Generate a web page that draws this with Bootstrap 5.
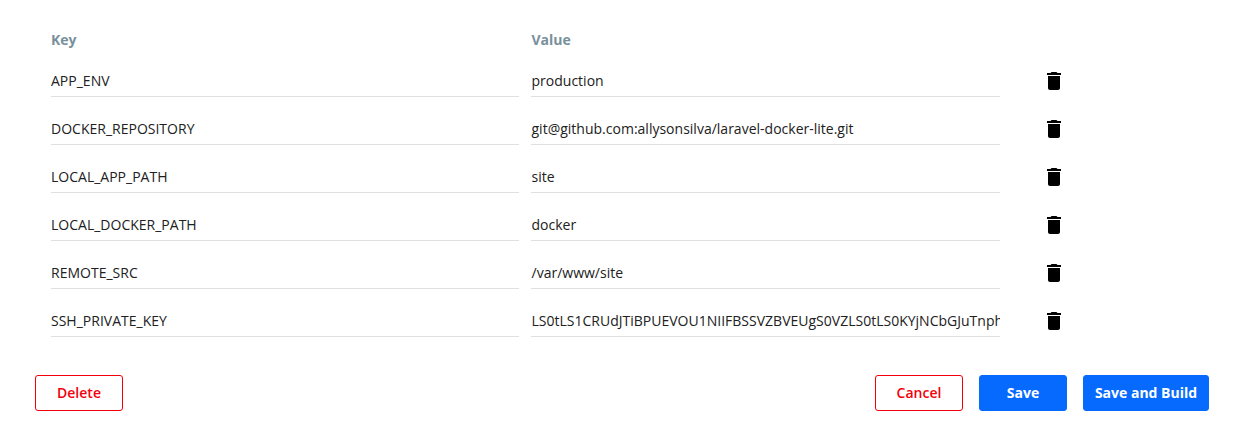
<!DOCTYPE html>
<html lang="en">
<head>
<meta charset="utf-8">
<meta name="viewport" content="width=device-width, initial-scale=1">
<title>Environment variables</title>
<link href="https://cdn.jsdelivr.net/npm/bootstrap@5.3.0/dist/css/bootstrap.min.css" rel="stylesheet">
<style>
body{font-family:"Open Sans",sans-serif;font-size:14px;line-height:20px;color:#212121;background:#fff}
.env-form{padding:30px 33px 28px 35px}
.env-grid{margin-left:16px}
.env-head{height:27px;color:#78909c;font-weight:700}
.env-key,.env-value{width:468px;margin-right:12px;flex:none}
.env-value{width:469px;margin-right:42px}
.env-head .env-value,.env-value .env-field{padding-left:.5px}
.env-row{height:48px}
.env-field{height:40px;line-height:48px;border-bottom:1px solid #e0e0e0;white-space:nowrap;overflow:hidden;letter-spacing:.005px}
.trash{width:24px;height:24px;margin-top:12px;color:#000}
.env-actions{margin-top:30px;gap:16px}
.env-btn{width:88px;height:36px;padding:0;border-radius:3px;font-size:14px;font-weight:700;line-height:34px;border:1px solid}
.env-btn.outline{color:#f3000b;border-color:#f3000b;background:#fff;font-weight:600}
.env-btn.solid{color:#fff;border-color:#066aff;background:#066aff}
.env-btn.wide{width:126px}
</style>
</head>
<body>
<svg class="d-none" xmlns="http://www.w3.org/2000/svg"><symbol id="trash" viewBox="0 0 24 24"><path fill="currentColor" d="M6 19c0 1.1.9 2 2 2h8c1.1 0 2-.9 2-2V7H6v12zM19 4h-3.5l-1-1h-5l-1 1H5v2h14V4z"/></symbol></svg>
<main class="env-form">
  <div class="env-grid">
    <div class="env-head d-flex"><div class="env-key">Key</div><div class="env-value">Value</div></div>
    <div class="env-row d-flex"><div class="env-key"><div class="env-field">APP_ENV</div></div><div class="env-value"><div class="env-field">production</div></div><svg class="trash"><use href="#trash"/></svg></div>
    <div class="env-row d-flex"><div class="env-key"><div class="env-field">DOCKER_REPOSITORY</div></div><div class="env-value"><div class="env-field">git@github.com:allysonsilva/laravel-docker-lite.git</div></div><svg class="trash"><use href="#trash"/></svg></div>
    <div class="env-row d-flex"><div class="env-key"><div class="env-field">LOCAL_APP_PATH</div></div><div class="env-value"><div class="env-field">site</div></div><svg class="trash"><use href="#trash"/></svg></div>
    <div class="env-row d-flex"><div class="env-key"><div class="env-field">LOCAL_DOCKER_PATH</div></div><div class="env-value"><div class="env-field">docker</div></div><svg class="trash"><use href="#trash"/></svg></div>
    <div class="env-row d-flex"><div class="env-key"><div class="env-field">REMOTE_SRC</div></div><div class="env-value"><div class="env-field">/var/www/site</div></div><svg class="trash"><use href="#trash"/></svg></div>
    <div class="env-row d-flex"><div class="env-key"><div class="env-field">SSH_PRIVATE_KEY</div></div><div class="env-value"><div class="env-field">LS0tLS1CRUdJTiBPUEVOU1NIIFBSSVZBVEUgS0VZLS0tLS0KYjNCbGJuTnph</div></div><svg class="trash"><use href="#trash"/></svg></div>
  </div>
  <div class="env-actions d-flex">
    <button type="button" class="btn env-btn outline me-auto">Delete</button>
    <button type="button" class="btn env-btn outline">Cancel</button>
    <button type="button" class="btn env-btn solid">Save</button>
    <button type="button" class="btn env-btn solid wide">Save and Build</button>
  </div>
</main>
<script src="https://cdn.jsdelivr.net/npm/bootstrap@5.3.0/dist/js/bootstrap.bundle.min.js"></script>
</body>
</html>
